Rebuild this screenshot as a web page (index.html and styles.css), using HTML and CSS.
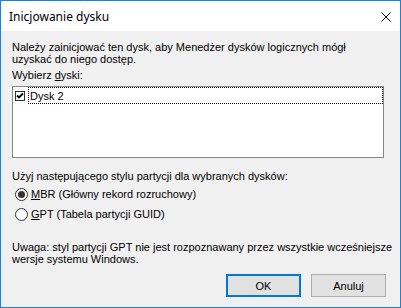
FILE: index.html
```html
<!DOCTYPE html>
<html lang="pl">
<head>
    <meta charset="UTF-8">
    <title>Inicjowanie dysku</title>
    <link rel="stylesheet" href="styles.css">
</head>
<body>
    <div class="window">
        <div class="titlebar">
            <div class="title">Inicjowanie dysku</div>
            <div class="close">
                <svg width="10" height="10" viewBox="0 0 10 10">
                    <path d="M0.5 0.5 L9.5 9.5 M9.5 0.5 L0.5 9.5" stroke="#000" stroke-width="1" fill="none"/>
                </svg>
            </div>
        </div>

        <div class="content">
            <div class="intro">Należy zainicjować ten dysk, aby Menedżer dysków logicznych mógł uzyskać do niego dostęp.</div>

            <div class="label">Wybierz <u>d</u>yski:</div>
            <div class="disk-list">
                <div class="disk-row">
                    <span class="checkbox">
                        <svg width="10" height="10" viewBox="0 0 10 10">
                            <path d="M2 4.5 L4 6.5 L8 2.5" stroke="#000" stroke-width="1.8" fill="none"/>
                        </svg>
                    </span>
                    <span class="disk-name">Dysk 2</span>
                </div>
            </div>

            <div class="label style-label">Użyj następującego stylu partycji dla wybranych dysków:</div>
            <div class="radio-row first">
                <span class="radio checked"></span>
                <span><u>M</u>BR (Główny rekord rozruchowy)</span>
            </div>
            <div class="radio-row">
                <span class="radio"></span>
                <span><u>G</u>PT (Tabela partycji GUID)</span>
            </div>

            <div class="note">Uwaga: styl partycji GPT nie jest rozpoznawany przez wszystkie wcześniejsze wersje systemu Windows.</div>

            <div class="buttons">
                <div class="button default">OK</div>
                <div class="button">Anuluj</div>
            </div>
        </div>
    </div>
</body>
</html>
```

FILE: styles.css
```css
body {
    margin: 0;
    background-color: #f0f0f0;
    font-family: "Liberation Sans", Arial, sans-serif;
    font-size: 11px;
    color: #000;
}
.window {
    width: 401px;
    height: 308px;
    box-sizing: border-box;
    border: 1px solid #1883d7;
    background-color: #f0f0f0;
    display: flex;
    flex-direction: column;
}
.titlebar {
    height: 30px;
    background-color: #fff;
    display: flex;
    align-items: center;
    justify-content: space-between;
    padding-left: 8px;
    padding-right: 9px;
}
.title {
    font-family: "Noto Sans", sans-serif;
    font-size: 12px;
    color: #000;
    padding-top: 1px;
}
.close {
    width: 10px;
    height: 10px;
    margin-top: 1px;
}
.close svg {
    display: block;
}
.content {
    padding: 10px 16px 0 11px;
    display: flex;
    flex-direction: column;
    line-height: 12px;
}
.intro {
    padding-right: 20px;
}
.label {
    margin-top: 4px;
}
.disk-list {
    margin-top: 5px;
    height: 72px;
    box-sizing: border-box;
    border: 1px solid #828790;
    background-color: #fff;
}
.disk-row {
    display: flex;
    align-items: flex-start;
}
.checkbox {
    width: 10px;
    height: 10px;
    box-sizing: border-box;
    border: 1px solid #333;
    margin: 4px 3px 0 2px;
}
.checkbox svg {
    display: block;
    margin: -1px;
}
.disk-name {
    flex: 1;
    height: 17px;
    box-sizing: border-box;
    border: 1px dotted #000;
    padding: 2px 1px;
    line-height: 12px;
}
.style-label {
    margin-top: 12px;
}
.radio-row {
    display: flex;
    align-items: center;
    height: 20px;
}
.radio-row.first {
    margin-top: 2px;
}
.radio {
    width: 13px;
    height: 13px;
    box-sizing: border-box;
    border: 1px solid #333;
    border-radius: 50%;
    background-color: #fff;
    margin: 0 3px 0 3px;
    display: flex;
    align-items: center;
    justify-content: center;
}
.radio.checked::after {
    content: "";
    width: 7px;
    height: 7px;
    border-radius: 50%;
    background-color: #333;
}
.note {
    margin-top: 17px;
    margin-right: -14px;
}
.buttons {
    display: flex;
    justify-content: flex-end;
    gap: 10px;
    margin-top: 9px;
    margin-right: -2px;
}
.button {
    width: 75px;
    height: 23px;
    box-sizing: border-box;
    border: 1px solid #adadad;
    background-color: #e1e1e1;
    display: flex;
    align-items: center;
    justify-content: center;
}
.button.default {
    border: 2px solid #0078d7;
}
```
